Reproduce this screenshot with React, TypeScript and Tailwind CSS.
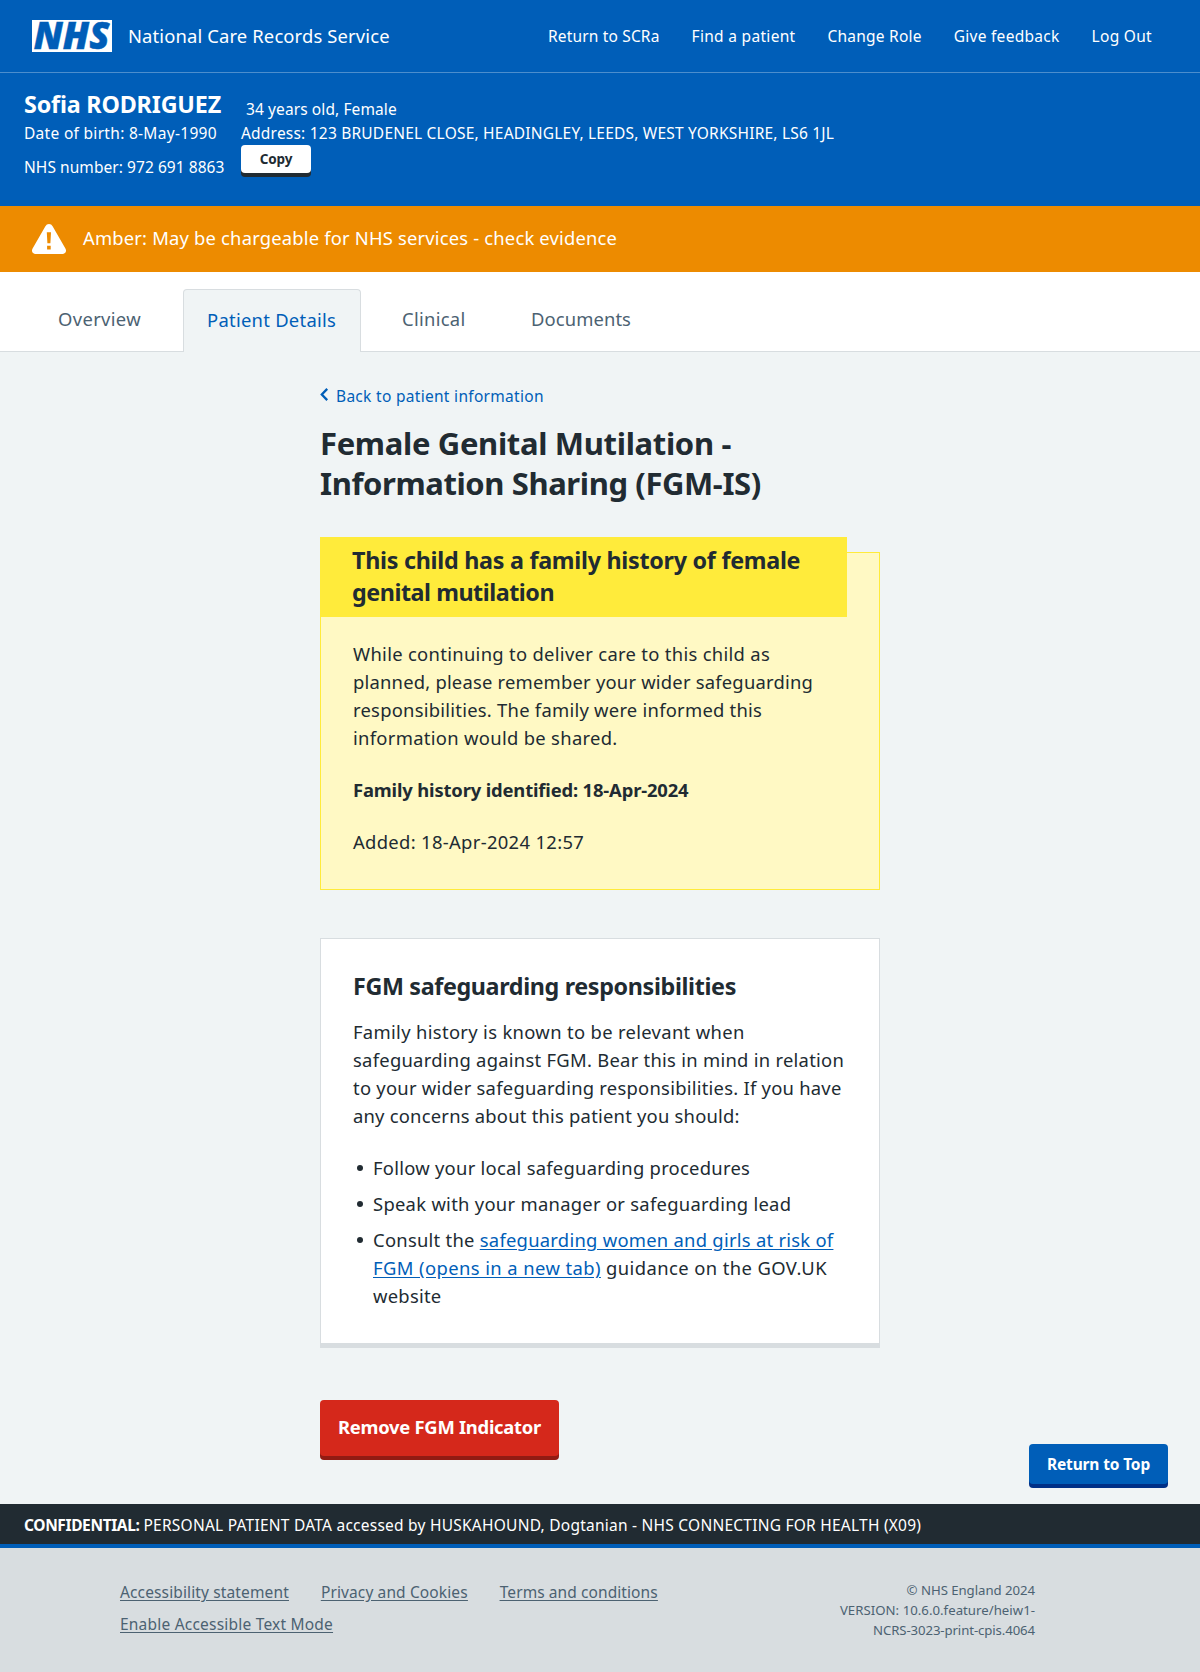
import type { ReactNode } from "react";

function NhsLogo() {
  return (
    <svg width="80" height="32" viewBox="0 0 80 32" className="block shrink-0 overflow-visible" role="img" aria-label="NHS">
      <rect width="80" height="32" fill="#fff" />
      <text
        x="1.8"
        y="29"
        fontFamily='"Open Sans", "Noto Sans", sans-serif'
        fontSize="37"
        fontWeight="800"
        fontStyle="italic"
        textLength="75.5"
        lengthAdjust="spacingAndGlyphs"
        fill="#005eb8"
        stroke="#005eb8"
        strokeWidth="0.5"
      >
        NHS
      </text>
    </svg>
  );
}

function WarningIcon() {
  return (
    <svg width="34" height="30" viewBox="0 0 34 30" className="block shrink-0">
      <path
        d="M13.4 2.2a4.1 4.1 0 0 1 7.2 0l12.8 22.4c1.6 2.700-.1 5.400-3 5.400H3.600c-2.900 0-4.600-2.700-3-5.400z"
        fill="#fff"
      />
      <path d="M14.800 8.300h4.200l-.6 11h-3zM15.100 21.700h3.600v3.700h-3.600z" fill="#ed8b00" />
    </svg>
  );
}

function Line({ className = "", children }: { className?: string; children: ReactNode }) {
  return <span className={`block whitespace-nowrap ${className}`}>{children}</span>;
}

function Bullet({ children }: { children: ReactNode }) {
  return (
    <li className="flex">
      <span className="mt-[11px] mr-2.5 ml-1 size-1.5 shrink-0 rounded-full bg-[#212b32]" />
      <div>{children}</div>
    </li>
  );
}

export default function App() {
  return (
    <div className="flex min-h-[1672px] w-[1200px] flex-col bg-[#f0f4f5] font-['Noto_Sans',sans-serif] text-[#212b32]">
      <header className="bg-[#005eb8] text-white">
        <div className="flex h-[73px] items-center border-b border-[#4c8ecd] pr-12 pl-8">
          <NhsLogo />
          <span className="ml-4 text-[18.4px] leading-7 tracking-[0.14px]">National Care Records Service</span>
          <nav className="ml-auto flex gap-8 text-[15.5px] leading-6">
            <a className="tracking-[0.17px]">Return to SCRa</a>
            <a className="tracking-[0.31px]">Find a patient</a>
            <a className="tracking-[0.22px]">Change Role</a>
            <a className="tracking-[0.28px]">Give feedback</a>
            <a className="tracking-[0.3px]">Log Out</a>
          </nav>
        </div>
        <div className="flex h-[133px] pl-6 text-[15.5px] leading-6 whitespace-nowrap">
          <div className="w-[217px] pt-[15px]">
            <h2 className="h-[33px] text-[23.3px] leading-8 font-bold tracking-[-0.17px]">Sofia RODRIGUEZ</h2>
            <p className="tracking-[0.3px]">Date of birth: 8-May-1990</p>
            <p className="mt-[10px] tracking-[0.06px]">NHS number: 972 691 8863</p>
          </div>
          <div className="pt-6">
            <p className="pl-[5px] tracking-[0.1px]">34 years old, Female</p>
            <p className="tracking-[0.21px]">Address: 123 BRUDENEL CLOSE, HEADINGLEY, LEEDS, WEST YORKSHIRE, LS6 1JL</p>
            <button className="flex h-7 w-[70px] items-center justify-center rounded-[4px] bg-white text-[13.5px] font-bold tracking-[-0.1px] text-[#212b32] shadow-[0_4px_0_#212b32]">
              Copy
            </button>
          </div>
        </div>
      </header>

      <div className="flex h-[66px] items-center bg-[#ed8b00] pl-8 text-white">
        <WarningIcon />
        <span className="-mt-0.5 ml-[17px] text-[18.4px] leading-7 tracking-[0.18px]">
          Amber: May be chargeable for NHS services - check evidence
        </span>
      </div>

      <nav className="flex h-20 items-end gap-4 border-b border-[#d8dde0] bg-white pl-8 text-[18.4px] leading-7 text-[#4c6272]">
        <a className="flex h-[63px] w-[135px] items-center pb-0.5 pl-[26px] tracking-[0.35px]">Overview</a>
        <a className="-mb-px flex h-[63px] w-[178px] items-center rounded-t-[4px] border border-b-0 border-[#d8dde0] bg-[#f0f4f5] pb-[3px] pl-[23px] tracking-[0.27px] text-[#005eb8]">
          Patient Details
        </a>
        <a className="flex h-[63px] w-[112px] items-center pb-0.5 pl-[25px] tracking-[0.3px]">Clinical</a>
        <a className="flex h-[63px] items-center pb-0.5 pl-[26px] tracking-[0.1px]">Documents</a>
      </nav>

      <main className="mx-auto w-[560px] pt-8">
        <a className="flex items-center text-[15.5px] leading-6 tracking-[0.3px] text-[#005eb8]">
          <svg width="9" height="13" viewBox="0 0 9 13" className="-mt-[3px] mr-[7px] block">
            <path d="M7.200 .900 1.800 6.500l5.400 5.600" fill="none" stroke="#005eb8" strokeWidth="2.300" />
          </svg>
          Back to patient information
        </a>

        <h1 className="mt-[15px] text-[31px] leading-10 font-bold">
          <Line className="tracking-[-0.33px]">Female Genital Mutilation -</Line>
          <Line className="tracking-[-0.4px]">Information Sharing (FGM-IS)</Line>
        </h1>

        <section className="mt-[49px] h-[338px] border border-[#ffeb3b] bg-[#fff9c4] text-[18.4px] leading-7">
          <h2 className="-mt-4 -ml-px h-20 w-[527px] bg-[#ffeb3b] pt-[7px] pl-8 text-[23.3px] leading-8 font-bold">
            <Line className="tracking-[-0.27px]">This child has a family history of female</Line>
            <Line className="tracking-[-0.46px]">genital mutilation</Line>
          </h2>
          <div className="pt-[23px] pl-8">
            <p>
              <Line className="tracking-[0.31px]">While continuing to deliver care to this child as</Line>
              <Line className="tracking-[0.21px]">planned, please remember your wider safeguarding</Line>
              <Line className="tracking-[0.25px]">responsibilities. The family were informed this</Line>
              <Line className="tracking-[0.31px]">information would be shared.</Line>
            </p>
            <p className="mt-6 font-bold">
              <Line className="tracking-[-0.15px]">Family history identified: 18-Apr-2024</Line>
            </p>
            <p className="mt-6">
              <Line className="tracking-[0.33px]">Added: 18-Apr-2024 12:57</Line>
            </p>
          </div>
        </section>

        <section className="mt-12 h-[410px] border border-b-[5px] border-[#d8dde0] bg-white px-8 pt-8 text-[18.4px] leading-7">
          <h2 className="-mt-px text-[23.3px] leading-8 font-bold">
            <Line className="tracking-[-0.35px]">FGM safeguarding responsibilities</Line>
          </h2>
          <p className="mt-4">
            <Line className="tracking-[0.33px]">Family history is known to be relevant when</Line>
            <Line className="tracking-[0.27px]">safeguarding against FGM. Bear this in mind in relation</Line>
            <Line className="tracking-[0.25px]">to your wider safeguarding responsibilities. If you have</Line>
            <Line className="tracking-[0.22px]">any concerns about this patient you should:</Line>
          </p>
          <ul className="mt-6 flex flex-col gap-2">
            <Bullet>
              <Line className="tracking-[0.26px]">Follow your local safeguarding procedures</Line>
            </Bullet>
            <Bullet>
              <Line className="tracking-[0.28px]">Speak with your manager or safeguarding lead</Line>
            </Bullet>
            <Bullet>
              <Line className="tracking-[0.26px]">
                Consult the <a className="text-[#005eb8] underline underline-offset-2">safeguarding women and girls at risk of</a>
              </Line>
              <Line className="tracking-[0.41px]">
                <a className="text-[#005eb8] underline underline-offset-2">FGM (opens in a new tab)</a> guidance on the GOV.UK
              </Line>
              <Line className="tracking-[0.25px]">website</Line>
            </Bullet>
          </ul>
        </section>

        <button className="mt-[52px] flex h-14 w-[239px] items-center justify-center rounded-[4px] bg-[#d5281b] pb-0.5 text-[18.4px] font-bold tracking-[-0.27px] whitespace-nowrap text-white shadow-[0_4px_0_#921b13]">
          Remove FGM Indicator
        </button>
      </main>

      <button className="-mt-3 mr-8 flex h-10 w-[139px] items-center justify-center self-end rounded-[4px] bg-[#005eb8] pt-0.5 text-[15.5px] font-bold tracking-[-0.15px] whitespace-nowrap text-white shadow-[0_4px_0_#003087]">
        Return to Top
      </button>

      <div className="mt-5 flex h-11 items-center border-b-4 border-[#005eb8] bg-[#212b32] pt-px pl-6 text-[15.5px] leading-6 whitespace-nowrap text-white">
        <b className="tracking-[-0.38px]">CONFIDENTIAL:</b>
        <span className="ml-[4px] tracking-[0.24px]">
          PERSONAL PATIENT DATA accessed by HUSKAHOUND, Dogtanian - NHS CONNECTING FOR HEALTH (X09)
        </span>
      </div>

      <footer className="flex flex-1 justify-between bg-[#d8dde0] pt-8 pr-[165px] pl-[120px] text-[#4c6272]">
        <div className="flex flex-col gap-2 text-[15.5px] leading-6 whitespace-nowrap">
          <div className="flex gap-8 underline underline-offset-2">
            <a className="tracking-[0.13px]">Accessibility statement</a>
            <a className="tracking-[0.12px]">Privacy and Cookies</a>
            <a className="tracking-[0.08px]">Terms and conditions</a>
          </div>
          <a className="self-start tracking-[0.21px] underline underline-offset-2">Enable Accessible Text Mode</a>
        </div>
        <div className="text-right text-[13.2px] leading-5">
          <Line className="tracking-[-0.04px]">© NHS England 2024</Line>
          <Line className="tracking-[0.03px]">VERSION: 10.6.0.feature/heiw1-</Line>
          <Line className="tracking-[-0.1px]">NCRS-3023-print-cpis.4064</Line>
        </div>
      </footer>
    </div>
  );
}
